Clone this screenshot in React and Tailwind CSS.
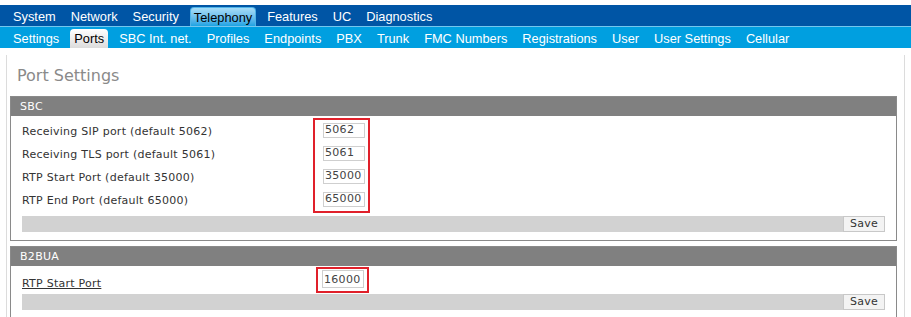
import React from "react";

const topMenu = ["System", "Network", "Security", "Telephony", "Features", "UC", "Diagnostics"];
const subMenu = [
  "Settings",
  "Ports",
  "SBC Int. net.",
  "Profiles",
  "Endpoints",
  "PBX",
  "Trunk",
  "FMC Numbers",
  "Registrations",
  "User",
  "User Settings",
  "Cellular",
];

const sbcRows = [
  { label: "Receiving SIP port (default 5062)", value: "5062" },
  { label: "Receiving TLS port (default 5061)", value: "5061" },
  { label: "RTP Start Port (default 35000)", value: "35000" },
  { label: "RTP End Port (default 65000)", value: "65000" },
];

function SaveBar() {
  return (
    <div className="flex h-[16px] justify-end bg-[#d2d2d2]">
      <button className="h-[16px] w-[42px] border border-[#c8c8c8] bg-[#f3f3f3] text-[11px] leading-[14px] tracking-[0.3px] text-[#333] font-['DejaVu_Sans',sans-serif]">
        Save
      </button>
    </div>
  );
}

function PortInput({ value, tall }) {
  return (
    <input
      readOnly
      value={value}
      className={`block w-[42px] ${tall ? "h-[18px]" : "h-[15px]"} border border-[#cfcfcf] bg-white pl-[1px] pr-0 text-[11px] tracking-[0.3px] text-[#444] outline-none font-['DejaVu_Sans',sans-serif]`}
    />
  );
}

export default function App() {
  return (
    <div className="w-[911px] h-[317px] overflow-hidden bg-white font-['Liberation_Sans',Arial,sans-serif]">
      <div className="h-[5px]" />

      {/* Top menu */}
      <div className="flex h-[21px] items-end gap-[7px] bg-[#0055a5] pl-[9px]">
        {topMenu.map((item) =>
          item === "Telephony" ? (
            <span
              key={item}
              className="h-[19px] rounded-t-[4px] border-x border-t border-[#4fb4e8] bg-gradient-to-b from-[#a6dcf7] to-[#18a3e3] px-[3px] text-[12.8px] leading-[19px] text-black"
            >
              {item}
            </span>
          ) : (
            <span key={item} className="h-[19px] px-[4px] text-[12.8px] leading-[19px] text-white">
              {item}
            </span>
          )
        )}
      </div>
      <div className="h-[1px] bg-[#74c6ee]" />

      {/* Sub menu */}
      <div className="flex h-[21px] items-end gap-[7px] bg-[#009fe0] pl-[9px]">
        {subMenu.map((item) =>
          item === "Ports" ? (
            <span
              key={item}
              className="h-[19px] rounded-t-[4px] bg-gradient-to-b from-white to-[#dcdcdc] px-[4px] text-[12.8px] leading-[19px] text-black"
            >
              {item}
            </span>
          ) : (
            <span key={item} className="h-[19px] px-[4px] text-[12.8px] leading-[19px] text-white">
              {item}
            </span>
          )
        )}
      </div>

      {/* Content */}
      <div className="mx-[6px] mt-[7px] h-[300px] border-x border-[#dcdcdc] pl-[3px] pr-[7px] pt-[11px] font-['DejaVu_Sans',sans-serif]">
        <h1 className="ml-[7px] h-[30px] text-[16px] leading-[20px] text-[#8a8a8a]">Port Settings</h1>

        {/* SBC */}
        <div className="border border-[#8a8a8a]">
          <div className="h-[19px] bg-[#808080] pl-[9px] text-[11px] leading-[19px] tracking-[0.3px] text-white">SBC</div>
          <div className="px-[11px] pt-[2px] pb-[8px]">
            <div className="flex">
              <div className="w-[291px] pt-[3px]">
                {sbcRows.map((r) => (
                  <div key={r.label} className="flex h-[23px] items-center text-[11px] tracking-[0.25px] text-[#333]">
                    {r.label}
                  </div>
                ))}
              </div>
              <div className="flex flex-col gap-[8px] border-2 border-[#e0202a] pt-[3px] pb-[2px] pl-[8px] pr-[3px]">
                {sbcRows.map((r) => (
                  <PortInput key={r.value} value={r.value} />
                ))}
              </div>
            </div>
            <div className="mt-[3px]">
              <SaveBar />
            </div>
          </div>
        </div>

        {/* B2BUA */}
        <div className="mt-[5px] h-[80px] border border-b-0 border-[#8a8a8a]">
          <div className="h-[19px] bg-[#808080] pl-[9px] text-[11px] leading-[19px] tracking-[0.3px] text-white">B2BUA</div>
          <div className="px-[11px] pt-[1px]">
            <div className="flex">
              <div className="flex w-[294px] items-end pb-[1px] text-[11px] tracking-[0.25px] text-[#333] underline">RTP Start Port</div>
              <div className="flex border-2 border-[#e0202a] pt-[1px] pb-[3px] pl-[4px] pr-[3px]">
                <PortInput value="16000" tall />
              </div>
            </div>
            <div className="mt-[1px]">
              <SaveBar />
            </div>
          </div>
        </div>
      </div>
    </div>
  );
}
